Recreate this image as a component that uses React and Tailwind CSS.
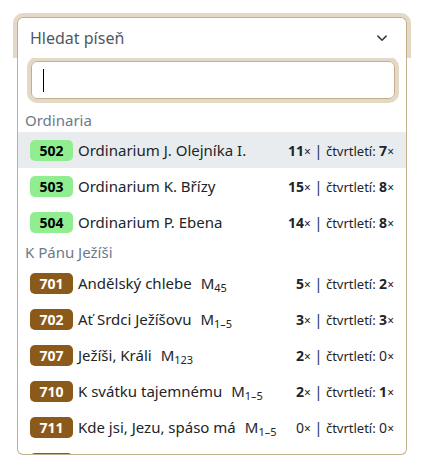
import React from "react";

const groups = [
  {
    name: "Ordinaria",
    tone: "green",
    items: [
      { n: "502", t: "Ordinarium J. Olejníka I.", c: "11", q: "7", active: true },
      { n: "503", t: "Ordinarium K. Břízy", c: "15", q: "8" },
      { n: "504", t: "Ordinarium P. Ebena", c: "14", q: "8" },
    ],
  },
  {
    name: "K Pánu Ježíši",
    tone: "brown",
    items: [
      { n: "701", t: "Andělský chlebe", m: "45", c: "5", q: "2" },
      { n: "702", t: "Ať Srdci Ježíšovu", m: "1–5", c: "3", q: "3" },
      { n: "707", t: "Ježíši, Králi", m: "123", c: "2", q: "0" },
      { n: "710", t: "K svátku tajemnému", m: "1–5", c: "2", q: "1" },
      { n: "711", t: "Kde jsi, Jezu, spáso má", m: "1–5", c: "0", q: "0" },
    ],
  },
];

function Count({ v }) {
  const zero = v === "0";
  return (
    <span>
      <span className={zero ? "text-[14px]" : "text-[14px] font-bold"}>{v}</span>
      <span className="text-[12px]">×</span>
    </span>
  );
}

function Badge({ n, tone }) {
  return (
    <span
      className={
        "w-[43px] h-[21px] rounded-[5px] flex items-center justify-center text-[14px] font-bold shrink-0 " +
        (tone === "green" ? "bg-[#90ee90] text-black" : "bg-[#8b5a1a] text-white")
      }
    >
      {n}
    </span>
  );
}

function Row({ item, tone }) {
  return (
    <div
      className={
        "flex items-center h-[36px] pl-[12px] pr-[12px] " +
        (item.active ? "bg-[#e9ecef]" : "")
      }
    >
      <Badge n={item.n} tone={tone} />
      <span className="ml-[5px] text-[15px] text-[#212529] whitespace-nowrap">
        {item.t}
        {item.m && (
          <span className="ml-[9px] text-[15px]">
            M<sub className="text-[11px]">{item.m}</sub>
          </span>
        )}
      </span>
      <span className="ml-auto text-[13px] text-[#212529] whitespace-nowrap">
        <Count v={item.c} /> <span className="text-[15px] text-[#1e3a5f]">|</span> čtvrtletí:{" "}
        <Count v={item.q} />
      </span>
    </div>
  );
}

export default function App() {
  return (
    <div
      className="w-[424px] h-[472px] bg-white overflow-hidden pt-[13px]"
      style={{ fontFamily: '"Noto Sans", sans-serif' }}
    >
      {/* toggle with focus ring */}
      <div className="mx-[13px] border-4 border-b-0 border-[#e4d9c7] rounded-t-[10px]">
        <button className="w-full h-[41px] flex items-center justify-between pl-[12px] pr-[18px] border border-b-0 border-[#c5ae8c] rounded-t-[6px] bg-white text-[16px] text-[#4f5864]">
          <span>Hledat píseň</span>
          <svg width="12" height="12" viewBox="0 0 16 16" fill="none">
            <path d="M2.5 5.5l5.5 5.5 5.5-5.5" stroke="#343a40" strokeWidth="2" strokeLinecap="round" strokeLinejoin="round" />
          </svg>
        </button>
      </div>

      {/* menu */}
      <div className="mx-[17px] h-[397px] border border-t-0 border-[#c5ae8c] rounded-b-[6px] overflow-hidden bg-white">
        <div className="pt-[3px] pb-[9px] pl-[13px] pr-[11px]">
          <div className="h-[38px] border border-[#c5ae8c] rounded-[6px] shadow-[0_0_0_4px_#e4d9c7] flex items-center pl-[11px]">
            <span className="w-px h-[23px] bg-black" />
          </div>
        </div>
        {groups.map((g, gi) => (
          <div key={g.name}>
            <div
              className={
                "px-[7px] flex items-center text-[15px] text-[#6c7a8a] " +
                (gi === 0 ? "h-[24px]" : "h-[25px]")
              }
            >
              {g.name}
            </div>
            {g.items.map((it) => (
              <Row key={it.n} item={it} tone={g.tone} />
            ))}
          </div>
        ))}
        {/* next row peeking under the bottom edge */}
        <div className="flex items-center h-[36px] pl-[12px]">
          <Badge n="" tone="brown" />
        </div>
      </div>
    </div>
  );
}
